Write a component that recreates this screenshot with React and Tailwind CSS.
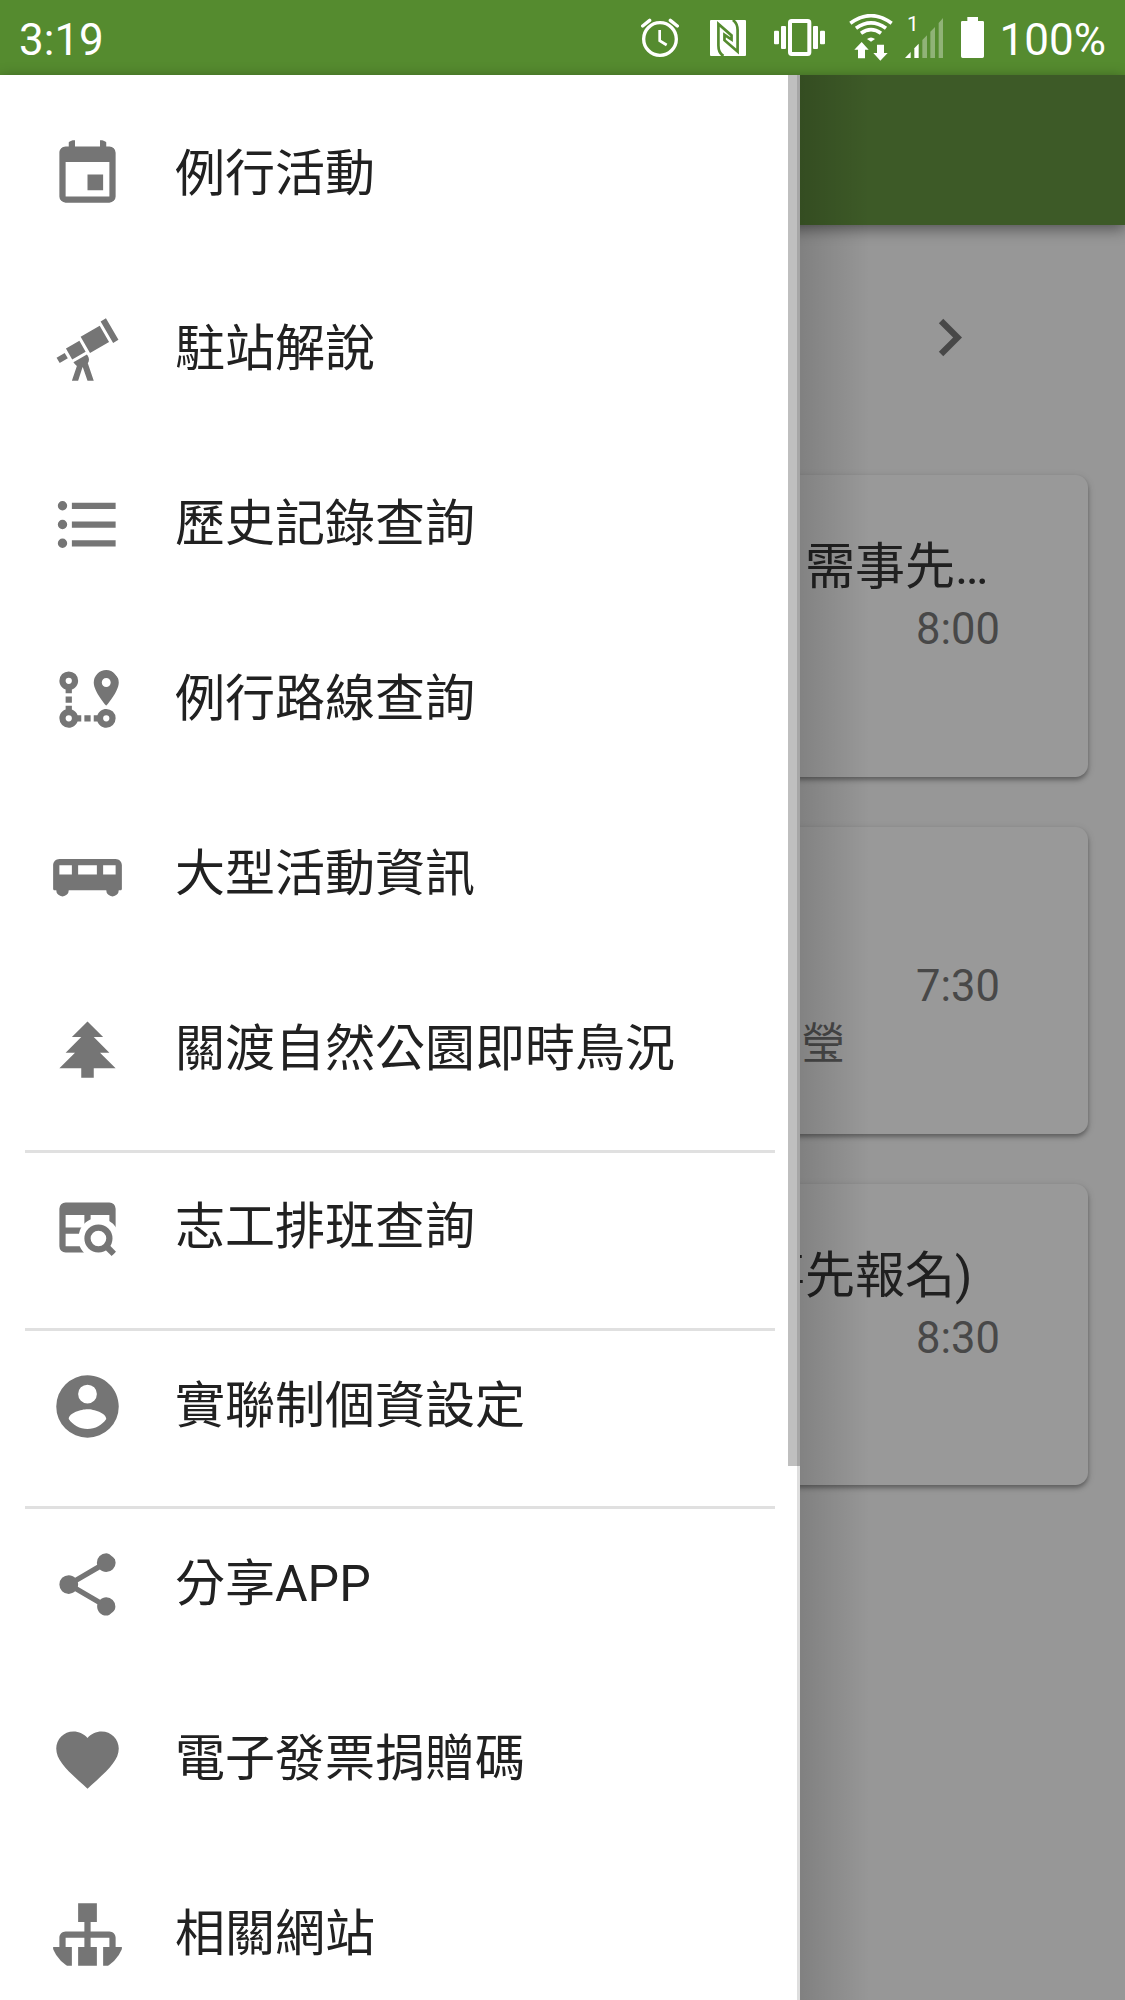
import React from 'react';

// 24x24 icon paths, one per menu entry
const ICONS = {
    event: "M19,3H18V1H16V3H8V1H6V3H5C3.89,3 3,3.9 3,5V19A2,2 0 0,0 5,21H19A2,2 0 0,0 21,19V5A2,2 0 0,0 19,3M19,19H5V8H19V19M12,12H17V17H12V12Z",
    telescope: "M21.9,8.9L20.2,9.9L16.2,3L17.9,2L21.9,8.9M9.8,7.9L12.8,13.1L18.9,9.6L15.9,4.4L9.8,7.9M11.4,12.7L9.4,9.2L5.1,11.7L7.1,15.2L11.4,12.7M2.1,14.6L3.1,16.3L5.7,14.8L4.7,13.1L2.1,14.6M12.1,14L11.8,13.6L7.5,16.1L7.8,16.5C8,16.8 8.3,17.1 8.6,17.3L7,22H9L10.4,17.7H10.5L12,22H14L12.1,16.4C12.6,15.7 12.6,14.8 12.1,14Z",
    list: "M7,5H21V7H7V5M7,13V11H21V13H7M4,4.5A1.5,1.5 0 0,1 5.5,6A1.5,1.5 0 0,1 4,7.5A1.5,1.5 0 0,1 2.5,6A1.5,1.5 0 0,1 4,4.5M4,10.5A1.5,1.5 0 0,1 5.5,12A1.5,1.5 0 0,1 4,13.5A1.5,1.5 0 0,1 2.5,12A1.5,1.5 0 0,1 4,10.5M7,19V17H21V19H7M4,16.5A1.5,1.5 0 0,1 5.5,18A1.5,1.5 0 0,1 4,19.5A1.5,1.5 0 0,1 2.5,18A1.5,1.5 0 0,1 4,16.5Z",
    route: "M18,15A3,3 0 0,1 21,18A3,3 0 0,1 18,21C16.69,21 15.58,20.17 15.17,19H14V17H15.17C15.58,15.83 16.69,15 18,15M18,17A1,1 0 0,0 17,18A1,1 0 0,0 18,19A1,1 0 0,0 19,18A1,1 0 0,0 18,17M18,8A1.43,1.43 0 0,0 19.43,6.57C19.43,5.78 18.79,5.14 18,5.14C17.21,5.14 16.57,5.78 16.57,6.57A1.43,1.43 0 0,0 18,8M18,2.57A4,4 0 0,1 22,6.57C22,9.56 18,14 18,14C18,14 14,9.56 14,6.57A4,4 0 0,1 18,2.57M8.83,17H10V19H8.83C8.42,20.17 7.31,21 6,21A3,3 0 0,1 3,18C3,16.69 3.83,15.58 5,15.17V14H7V15.17C7.85,15.47 8.53,16.15 8.83,17M6,17A1,1 0 0,0 5,18A1,1 0 0,0 6,19A1,1 0 0,0 7,18A1,1 0 0,0 6,17M6,3A3,3 0 0,1 9,6C9,7.31 8.17,8.42 7,8.83V10H5V8.83C3.83,8.42 3,7.31 3,6A3,3 0 0,1 6,3M6,5A1,1 0 0,0 5,6A1,1 0 0,0 6,7A1,1 0 0,0 7,6A1,1 0 0,0 6,5M11,19V17H13V19H11M7,13H5V11H7V13Z",
    bus: "M3,7C1.89,7 1,7.89 1,9V17H2A2,2 0 0,0 4,19A2,2 0 0,0 6,17H18A2,2 0 0,0 20,19A2,2 0 0,0 22,17H23V9C23,7.89 22.11,7 21,7H3M3,9H7V12H3V9M9,9H15V12H9V9M17,9H21V12H17V9Z",
    tree: "M10,21V18H3L8,13H5L10,8H7L12,3L17,8H14L19,13H16L21,18H14V21H10Z",
    account: "M12,19.2C9.5,19.2 7.29,17.92 6,16C6.03,14 10,12.9 12,12.9C14,12.9 17.97,14 18,16C16.71,17.92 14.5,19.2 12,19.2M12,5A3,3 0 0,1 15,8A3,3 0 0,1 12,11A3,3 0 0,1 9,8A3,3 0 0,1 12,5M12,2A10,10 0 0,0 2,12A10,10 0 0,0 12,22A10,10 0 0,0 22,12C22,6.47 17.5,2 12,2Z",
    share: "M18,16.08C17.24,16.08 16.56,16.38 16.04,16.85L8.91,12.7C8.96,12.47 9,12.24 9,12C9,11.76 8.96,11.53 8.91,11.3L15.96,7.19C16.5,7.69 17.21,8 18,8A3,3 0 0,0 21,5A3,3 0 0,0 18,2A3,3 0 0,0 15,5C15,5.24 15.04,5.47 15.09,5.7L8.04,9.81C7.5,9.31 6.79,9 6,9A3,3 0 0,0 3,12A3,3 0 0,0 6,15C6.79,15 7.5,14.69 8.04,14.19L15.16,18.34C15.11,18.55 15.08,18.77 15.08,19C15.08,20.61 16.39,21.91 18,21.91C19.61,21.91 20.92,20.61 20.92,19A2.92,2.92 0 0,0 18,16.08Z",
    heart: "M12,21.35L10.55,20.03C5.4,15.36 2,12.27 2,8.5C2,5.41 4.42,3 7.5,3C9.24,3 10.91,3.81 12,5.08C13.09,3.81 14.76,3 16.5,3C19.58,3 22,5.41 22,8.5C22,12.27 18.6,15.36 13.45,20.03L12,21.35Z",
    sitemap: "M9,2V8H11V11H5C3.89,11 3,11.89 3,13V16H1V22H7V16H5V13H11V16H9V22H15V16H13V13H19V16H17V22H23V16H21V13C21,11.89 20.11,11 19,11H13V8H15V2H9Z",
};

const menuGroups = [
    [
        { icon: 'event', label: '例行活動' },
        { icon: 'telescope', label: '駐站解說' },
        { icon: 'list', label: '歷史記錄查詢' },
        { icon: 'route', label: '例行路線查詢' },
        { icon: 'bus', label: '大型活動資訊' },
        { icon: 'tree', label: '關渡自然公園即時鳥況' },
    ],
    [{ icon: 'tableSearch', label: '志工排班查詢' }],
    [{ icon: 'account', label: '實聯制個資設定' }],
    [
        { icon: 'share', label: '分享APP' },
        { icon: 'heart', label: '電子發票捐贈碼' },
        { icon: 'sitemap', label: '相關網站' },
    ],
];

const MenuIcon = ({ name }) => (
    <svg viewBox="0 0 24 24" className="w-[75px] h-[75px] shrink-0 rounded-full text-[#757575]" fill="currentColor">
        {name === 'tableSearch' ? (
            <>
                <path fillRule="evenodd" d="M5,4H19A2,2 0 0,1 21,6V20H5A2,2 0 0,1 3,18V6A2,2 0 0,1 5,4M5,8V12H11V8H5M13,8V12H19V8H13M5,14V18H11V14H5Z" />
                <path fill="#fff" d="M15.5,8.9A6.6,6.6 0 0,1 22.1,15.5V22H12L10.8,20A6.6,6.6 0 0,1 15.5,8.9Z" />
                <circle cx="15.5" cy="15.5" r="3.5" fill="none" stroke="currentColor" strokeWidth="2" />
                <path d="M19.1,17.7L21.2,19.8L19.8,21.2L17.7,19.1Z" />
            </>
        ) : (
            <path d={ICONS[name]} />
        )}
    </svg>
);

const StatusBar = () => (
    <div className="h-[75px] bg-[#558b2f] text-white flex items-center justify-between pl-[19px] pr-[19px] text-[44px] leading-none">
        <span className="pt-[4px]">3:19</span>
        <div className="flex items-start h-full">
            {/* alarm */}
            <svg viewBox="0 0 114 120" className="w-[38px] h-[40px] mt-[18px]" fill="none" stroke="#fff">
                <circle cx="57" cy="63" r="49" strokeWidth="10" />
                <path d="M56,36V68L77,81" strokeWidth="8" />
                <path d="M5,24L26,7M109,24L88,7" strokeWidth="10" strokeLinecap="round" />
            </svg>
            {/* nfc */}
            <svg viewBox="0 0 107 107" className="w-[36px] h-[36px] mt-[20px] ml-[31px]">
                <rect width="107" height="107" rx="3" fill="#fff" />
                <path d="M40,107Q25,98 25,76V12L64,46V58L43,44V60L82,94V30Q82,10 68,0" fill="none" stroke="#558b2f" strokeWidth="8" />
            </svg>
            {/* vibrate */}
            <svg viewBox="0 0 153 111" className="w-[51px] h-[37px] mt-[19px] ml-[28px]" fill="#fff">
                <rect x="48" y="6" width="58" height="99" rx="5" fill="none" stroke="#fff" strokeWidth="12" />
                <rect x="0" y="35" width="15" height="41" rx="3" />
                <rect x="21" y="21" width="15" height="69" rx="3" />
                <rect x="117" y="21" width="15" height="69" rx="3" />
                <rect x="138" y="35" width="15" height="41" rx="3" />
            </svg>
            {/* wifi with traffic arrows */}
            <svg viewBox="0 0 132 141" className="w-[44px] h-[47px] mt-[14px] ml-[24px]" fill="none" stroke="#fff">
                <path d="M4,28Q66,-18 128,28" strokeWidth="11" />
                <path d="M21,43Q66,10 111,43" strokeWidth="11" />
                <path d="M36,58Q66,36 96,58" strokeWidth="11" />
                <path d="M54,75Q66,66 78,75L66,83Z" fill="#fff" stroke="none" />
                <path d="M38,84L59,107H48V133H27V107H16Z" fill="#fff" stroke="none" />
                <path d="M94,140L116,117H105V92H84V117H73Z" fill="#fff" stroke="none" />
            </svg>
            {/* mobile signal */}
            <div className="relative mt-[17px] ml-[12px]">
                <svg viewBox="0 0 114 123" className="w-[38px] h-[41px]" fill="#fff">
                    <path d="M0,123L17,105V123Z" />
                    <path d="M28,94L41,80V123H28Z" />
                    <path opacity=".35" d="M52,69L66,55V123H52ZM76,44L90,30V123H76ZM101,18L114,3V123H101Z" />
                </svg>
                <span className="absolute left-[2px] top-[-3px] text-[21px] leading-none">1</span>
            </div>
            {/* battery */}
            <svg viewBox="0 0 69 123" className="w-[23px] h-[41px] mt-[17px] ml-[18px]" fill="#fff">
                <path d="M19,0H51V12H65Q69,12 69,16V118Q69,123 64,123H5Q0,123 0,118V16Q0,12 4,12H19Z" />
            </svg>
            <span className="h-full flex items-center ml-[15.5px] pt-[4px]">100%</span>
        </div>
    </div>
);

const Card = ({ className, children }) => (
    <div className={`mx-[37.5px] rounded-[12.5px] bg-[#999] shadow-[0_3px_4px_rgba(0,0,0,0.3),0_2px_9px_rgba(0,0,0,0.12)] flex flex-col ${className}`}>
        {children}
    </div>
);

const Schedule = () => (
    <div className="bg-[#979797] h-[1925px] text-[43.5px] text-[#484848]">
        <div className="h-[150px] bg-[#3d5a27] shadow-[0_4px_14px_rgba(0,0,0,0.45)]"></div>
        <div className="h-[250px] pt-[75px] pr-[138px] flex justify-end">
            <svg viewBox="0 0 24 24" className="w-[75px] h-[75px]" fill="#484848">
                <path d="M10 6L8.59 7.41 13.17 12l-4.58 4.59L10 18l6-6z" />
            </svg>
        </div>
        <div className="flex flex-col gap-[50px]">
            <Card className="h-[301.5px] pt-[62px]">
                <div className="pl-[767.5px] text-[50px] leading-[60px] text-[#202020]">需事先…</div>
                <div className="pr-[87.5px] pt-[5px] leading-[56px] text-right">8:00</div>
            </Card>
            <Card className="h-[307px] pt-[132px]">
                <div className="pr-[87.5px] leading-[56px] text-right">7:30</div>
                <div className="pl-[764px] leading-[60px]">瑩</div>
            </Card>
            <Card className="h-[301px] pt-[62px]">
                <div className="pl-[717.5px] text-[50px] leading-[60px] text-[#202020]">事先報名)</div>
                <div className="pr-[87.5px] pt-[5px] leading-[56px] text-right">8:30</div>
            </Card>
        </div>
    </div>
);

const Drawer = () => (
    <div className="absolute left-0 top-[75px] w-[800px] h-[1925px] bg-white pt-[25px] overflow-hidden">
        {menuGroups.map((group, i) => (
            <div key={i} className={i > 0 ? "border-t-[3px] border-[#e0e0e0] ml-[25px] mr-[25px] pb-[0.125px]" : "mx-[25px]"}>
                {group.map(item => (
                    <div key={item.label} className="h-[175px] pt-[37.4px] pl-[25px] flex items-start">
                        <MenuIcon name={item.icon} />
                        <span className="pl-[50px] text-[50px] leading-[75px] text-[#212121] whitespace-nowrap">{item.label}</span>
                    </div>
                ))}
            </div>
        ))}
        <div className="absolute right-0 top-0 w-[3px] h-full bg-[#dedede]"></div>
        {/* scrollbar thumb */}
        <div className="absolute right-0 top-0 w-[12.5px] h-[1391px] bg-black/25"></div>
    </div>
);

export default function App() {
    return (
        <div className="relative w-[1125px] h-[2000px] overflow-hidden font-['Roboto','Noto_Sans_CJK_TC',sans-serif]">
            <StatusBar />
            <Schedule />
            <div className="absolute left-[800px] top-[75px] w-[70px] h-[1925px] bg-gradient-to-r from-black/15 to-transparent"></div>
            <Drawer />
        </div>
    );
}
